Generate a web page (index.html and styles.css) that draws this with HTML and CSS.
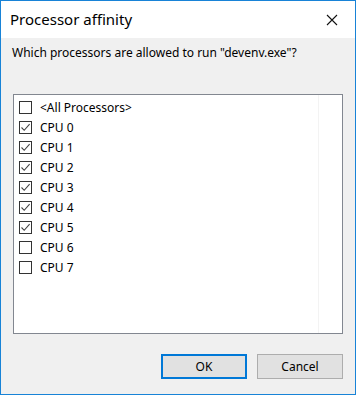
FILE: index.html
```html
<!DOCTYPE html>
<html lang="en">
<head>
  <meta charset="UTF-8">
  <title>Processor affinity</title>
  <link rel="stylesheet" href="styles.css">
</head>
<body>
  <div class="window">
    <div class="titlebar">
      <div class="title">Processor affinity</div>
      <div class="close">
        <svg width="12" height="12" viewBox="0 0 12 12">
          <path d="M1 1 L11 11 M11 1 L1 11" stroke="#111" stroke-width="1.1" fill="none"/>
        </svg>
      </div>
    </div>
    <div class="content">
      <p class="prompt">Which processors are allowed to run "devenv.exe"?</p>
      <div class="list">
        <div class="list-rows" id="rows"></div>
        <div class="col-line"></div>
      </div>
      <div class="buttons">
        <button class="btn default">OK</button>
        <button class="btn">Cancel</button>
      </div>
    </div>
  </div>

  <script>
    // Build the processor rows
    const items = [
      { label: '<All Processors>', checked: false },
      { label: 'CPU 0', checked: true },
      { label: 'CPU 1', checked: true },
      { label: 'CPU 2', checked: true },
      { label: 'CPU 3', checked: true },
      { label: 'CPU 4', checked: true },
      { label: 'CPU 5', checked: true },
      { label: 'CPU 6', checked: false },
      { label: 'CPU 7', checked: false }
    ];
    const rows = document.getElementById('rows');
    items.forEach(item => {
      const row = document.createElement('div');
      row.className = 'row';
      const box = document.createElement('span');
      box.className = 'box';
      if (item.checked) {
        box.innerHTML = '<svg width="11" height="11" viewBox="0 0 11 11"><path d="M1.5 5.5 L4.2 8.3 L9.6 2.2" stroke="#444" stroke-width="1.1" fill="none"/></svg>';
      }
      const text = document.createElement('span');
      text.className = 'label';
      text.textContent = item.label;
      row.appendChild(box);
      row.appendChild(text);
      rows.appendChild(row);
    });
  </script>
</body>
</html>
```

FILE: styles.css
```css
html, body {
  margin: 0; padding: 0;
}
body {
  font-family: 'Noto Sans', 'Open Sans', sans-serif;
  color: #000;
}
.window {
  width: 356px;
  height: 395px;
  box-sizing: border-box;
  border: 1px solid #1883d7;
  background: #f0f0f0;
  display: flex;
  flex-direction: column;
}
.titlebar {
  height: 37px;
  background: #ffffff;
  display: flex;
  align-items: center;
  justify-content: space-between;
  padding-left: 9px;
}
.title {
  font-size: 15px;
  margin-top: -1px;
}
.close {
  width: 46px;
  height: 37px;
  display: flex;
  align-items: center;
  justify-content: center;
}
.content {
  flex: 1;
  display: flex;
  flex-direction: column;
  padding: 7px 12px 16px 12px;
}
.prompt {
  margin: 0 0 0 -1px;
  font-size: 12px;
  line-height: 16px;
}
.list {
  margin-top: 33px;
  height: 240px;
  box-sizing: border-box;
  border: 1px solid #828790;
  background: #ffffff;
  position: relative;
}
.list-rows {
  padding: 2px 0 0 5px;
}
.col-line {
  position: absolute;
  top: 0; bottom: 0;
  left: 304px;
  border-left: 1px solid #f3f3f3;
}
.row {
  height: 20px;
  display: flex;
  align-items: center;
  gap: 8px;
  font-size: 12px;
}
.box {
  width: 13px;
  height: 13px;
  box-sizing: border-box;
  border: 1px solid #333333;
  display: flex;
  align-items: center;
  justify-content: center;
}
.buttons {
  margin-top: 20px;
  display: flex;
  justify-content: flex-end;
  gap: 10px;
}
.btn {
  width: 86px;
  height: 25px;
  box-sizing: border-box;
  border: 1px solid #adadad;
  background: #e1e1e1;
  font-family: inherit;
  font-size: 12px;
  color: #000;
  padding: 0;
}
.btn.default {
  border: 2px solid #0078d7;
}
```
